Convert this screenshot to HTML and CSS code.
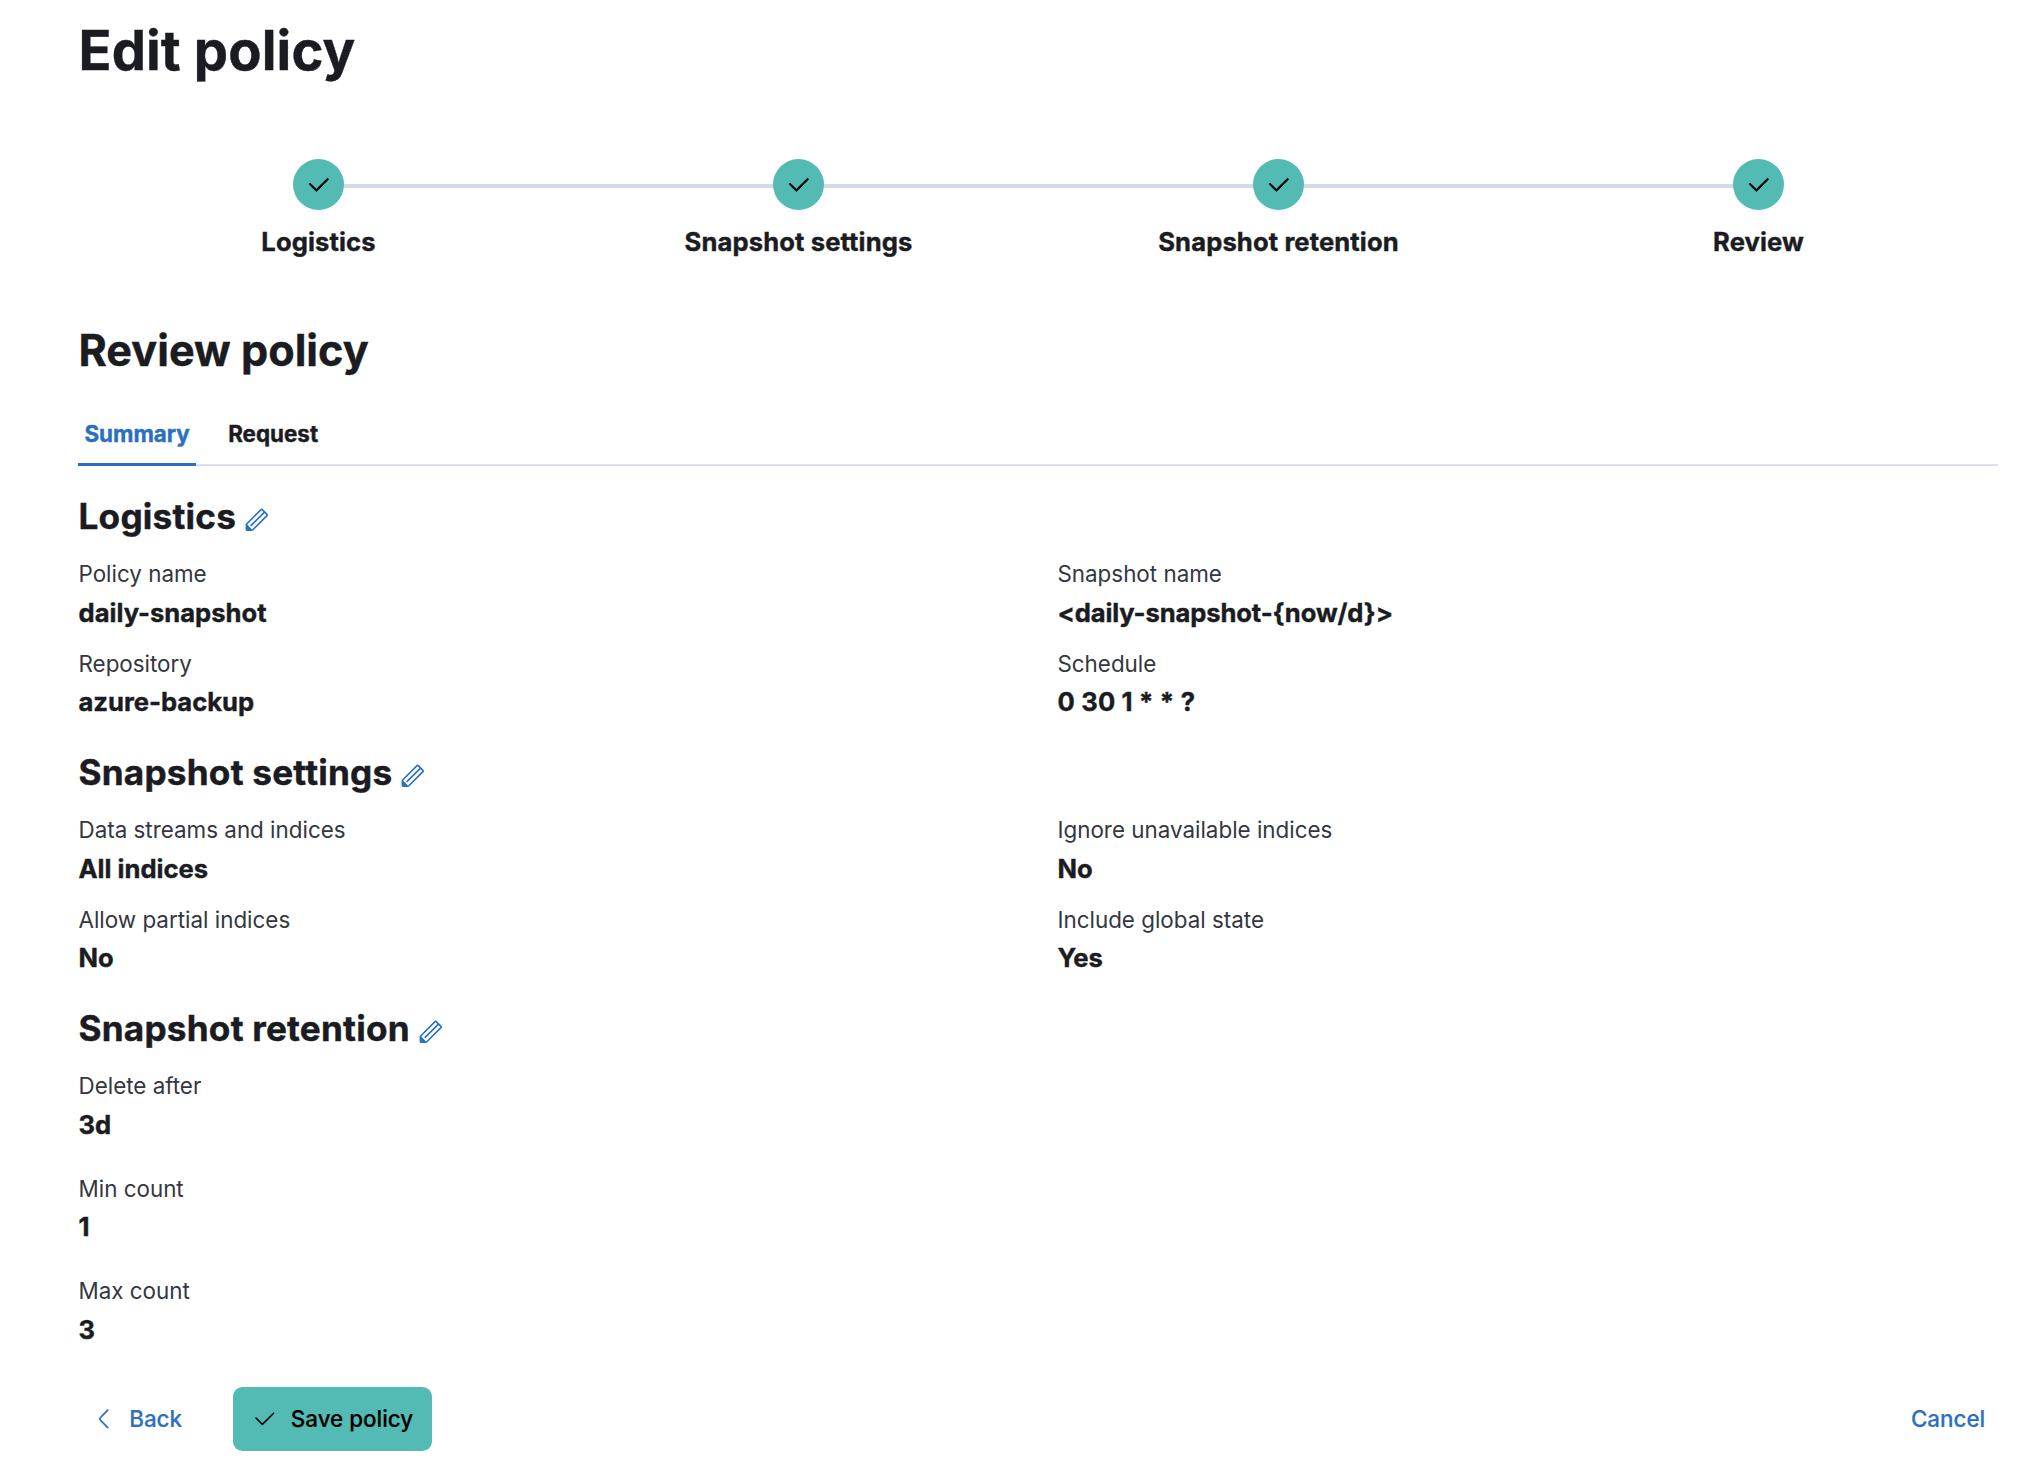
FILE: index.html
```html
<!DOCTYPE html>
<html lang="en">
<head>
<meta charset="utf-8">
<title>Edit policy</title>
<link rel="stylesheet" href="styles.css">
</head>
<body>
<svg class="sprite" aria-hidden="true">
  <symbol id="check" viewBox="0 0 16 16"><path d="M6.5 12a.502.502 0 01-.354-.146l-4-4a.502.502 0 01.708-.708L6.5 10.793l6.646-6.647a.502.502 0 01.708.708l-7 7A.502.502 0 016.5 12z"/></symbol>
  <symbol id="pencil" viewBox="0 0 16 16"><path d="M12.148 3.148L11 2l-9 9v3h3l9-9-1.144-1.144-8.002 7.998a.502.502 0 01-.708 0 .502.502 0 010-.708l8.002-7.998zM11 1c.256 0 .512.098.707.293l3 3a.999.999 0 010 1.414l-9 9A.997.997 0 015 15H2a1 1 0 01-1-1v-3c0-.265.105-.52.293-.707l9-9A.997.997 0 0111 1zM5 14H2v-3l3 3z"/></symbol>
  <symbol id="arrow-left" viewBox="0 0 16 16"><path d="M10.843 13.069L6.232 8.384a.546.546 0 010-.768l4.61-4.685a.552.552 0 000-.771.53.53 0 00-.759 0l-4.61 4.684a1.65 1.65 0 000 2.312l4.61 4.684a.53.53 0 00.76 0 .552.552 0 000-.771z"/></symbol>
</svg>
<main class="page">
  <h1 class="title">Edit policy</h1>
  <ol class="steps">
    <li class="step"><span class="step-circle"><svg class="icon"><use href="#check"/></svg></span><span class="step-label">Logistics</span></li>
    <li class="step"><span class="step-circle"><svg class="icon"><use href="#check"/></svg></span><span class="step-label">Snapshot settings</span></li>
    <li class="step"><span class="step-circle"><svg class="icon"><use href="#check"/></svg></span><span class="step-label">Snapshot retention</span></li>
    <li class="step"><span class="step-circle"><svg class="icon"><use href="#check"/></svg></span><span class="step-label">Review</span></li>
  </ol>
  <h2 class="subtitle">Review policy</h2>
  <nav class="tabs">
    <a class="tab tab-selected">Summary</a>
    <a class="tab">Request</a>
  </nav>
  <section class="section">
    <h3 class="heading">Logistics <svg class="icon edit"><use href="#pencil"/></svg></h3>
    <dl class="grid">
      <div><dt>Policy name</dt><dd>daily-snapshot</dd></div>
      <div><dt>Snapshot name</dt><dd class="pattern">&lt;daily-snapshot-{now/d}&gt;</dd></div>
      <div><dt>Repository</dt><dd>azure-backup</dd></div>
      <div><dt>Schedule</dt><dd class="cron">0 30 1 * * ?</dd></div>
    </dl>
  </section>
  <section class="section">
    <h3 class="heading">Snapshot settings <svg class="icon edit"><use href="#pencil"/></svg></h3>
    <dl class="grid">
      <div><dt>Data streams and indices</dt><dd>All indices</dd></div>
      <div><dt>Ignore unavailable indices</dt><dd>No</dd></div>
      <div><dt>Allow partial indices</dt><dd>No</dd></div>
      <div><dt>Include global state</dt><dd>Yes</dd></div>
    </dl>
  </section>
  <section class="section">
    <h3 class="heading">Snapshot retention <svg class="icon edit"><use href="#pencil"/></svg></h3>
    <dl class="grid grid-single">
      <div><dt>Delete after</dt><dd>3d</dd></div>
      <div><dt>Min count</dt><dd>1</dd></div>
      <div><dt>Max count</dt><dd>3</dd></div>
    </dl>
  </section>
  <footer class="actions">
    <button class="button"><svg class="icon"><use href="#arrow-left"/></svg><span>Back</span></button>
    <button class="button button-fill"><svg class="icon"><use href="#check"/></svg><span>Save policy</span></button>
    <button class="button button-end"><span>Cancel</span></button>
  </footer>
</main>
</body>
</html>
```
FILE: styles.css
```css
* { box-sizing: border-box; margin: 0; padding: 0; }
body { background: #fff; color: #1a1c21; font-family: Inter, sans-serif; font-size: 22.4px; }
.sprite { display: none; }
.icon { width: 25.6px; height: 25.6px; fill: currentColor; flex: none; -webkit-text-stroke: 0; }
.page { padding: 18px 30px 0 78px; }
.title, .subtitle, .heading, .step-label, .tab, dd { font-weight: 700; -webkit-text-stroke: .4px currentColor; }
.title { padding-left: .5px; font-size: 54.4px; line-height: 64px; letter-spacing: .1px; }

.steps { display: flex; list-style: none; margin: 77px -.5px 0 .5px; }
.step { flex: 1; display: flex; flex-direction: column; align-items: center; position: relative; }
.step + .step::before { content: ""; position: absolute; top: 25px; right: 50%; width: 100%; height: 4px; background: #d3dae6; }
.step-circle { position: relative; z-index: 1; width: 51px; height: 51px; border-radius: 50%; background: #54bbb4; color: #000; display: flex; align-items: center; justify-content: center; }
.step-circle .icon { stroke: currentColor; stroke-width: .5; }
.step-label { margin-top: 12px; font-size: 25.6px; line-height: 40px; letter-spacing: .12px; }

.subtitle { padding-left: .5px; margin-top: 63px; font-size: 43.2px; line-height: 51px; }

.tabs { display: flex; gap: 25.6px; height: 64px; margin-top: 26px; box-shadow: inset 0 -1px #d3dae6, inset 0 -2px #e2e7ef; }
.tab { padding: 0 6.4px; line-height: 64px; }
.tab-selected { color: #2b70bf; box-shadow: inset 0 -3px #2b70bf; }

.section { margin-top: 31px; }
.heading { display: flex; align-items: center; gap: 8px; padding-left: .5px; font-size: 35.2px; line-height: 38px; letter-spacing: .2px; }
.edit { color: #2b70bf; margin-top: 8px; }
.grid { display: grid; grid-template-columns: 1fr 1fr; gap: 12.8px 38.4px; margin-top: 20.4px; padding-left: .5px; line-height: 38.4px; }
.grid-single { grid-template-columns: 1fr; margin-top: 20.8px; row-gap: 25.6px; }
dt { color: #343741; }
dd { font-size: 25.6px; }
.pattern { letter-spacing: -.12px; }
.cron { letter-spacing: .2px; }

.actions { display: flex; margin-top: 38px; }
.button { display: flex; align-items: center; gap: 12.8px; height: 64px; padding: 0 12.8px; border: 0; border-radius: 9.6px; background: none; color: #2b70bf; font: 500 22.4px Inter, sans-serif; -webkit-text-stroke: .2px currentColor; }
.button span { padding-bottom: 2px; }
.button-fill { margin-left: 38.4px; padding: 0 19.2px; background: #54bbb4; color: #000; }
.button-end { margin-left: auto; }
```
